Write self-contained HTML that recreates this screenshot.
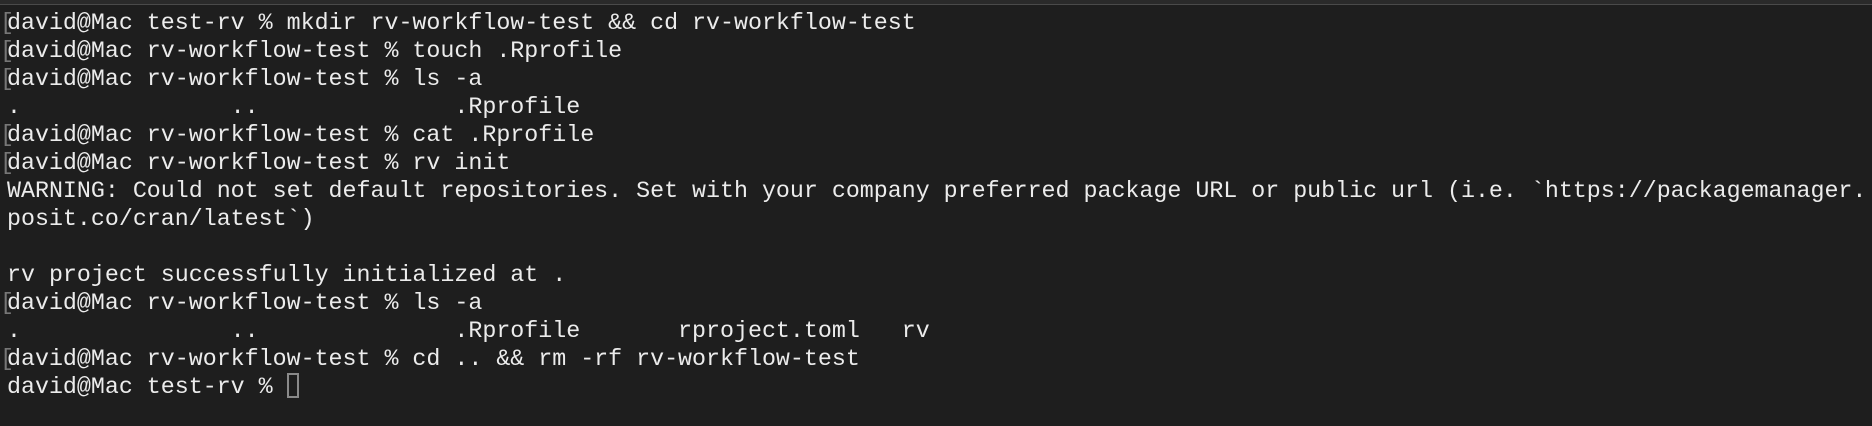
<!DOCTYPE html>
<html><head><meta charset="utf-8"><style>
html,body{margin:0;padding:0;}
body{width:1872px;height:426px;background:#1e1e1e;overflow:hidden;position:relative;}
.top{position:absolute;left:0;top:0;width:1872px;height:4px;background:#2a2a2a;border-bottom:1px solid #4a4a4a;}
pre{position:absolute;left:7px;top:9px;margin:0;font-family:"Liberation Mono",monospace;font-size:23.3px;line-height:28px;color:#ececec;white-space:pre;}
.b{position:absolute;left:-7px;color:#777;}
.cur{display:inline-block;width:12px;height:25px;border:2px solid #8a8a8a;box-sizing:border-box;vertical-align:-5px;}
</style></head><body>
<div class="top"></div>
<pre><span class="b">[</span>david@Mac test-rv % mkdir rv-workflow-test &amp;&amp; cd rv-workflow-test
<span class="b">[</span>david@Mac rv-workflow-test % touch .Rprofile
<span class="b">[</span>david@Mac rv-workflow-test % ls -a
.               ..              .Rprofile
<span class="b">[</span>david@Mac rv-workflow-test % cat .Rprofile
<span class="b">[</span>david@Mac rv-workflow-test % rv init
WARNING: Could not set default repositories. Set with your company preferred package URL or public url (i.e. `https://packagemanager.
posit.co/cran/latest`)

rv project successfully initialized at .
<span class="b">[</span>david@Mac rv-workflow-test % ls -a
.               ..              .Rprofile       rproject.toml   rv
<span class="b">[</span>david@Mac rv-workflow-test % cd .. &amp;&amp; rm -rf rv-workflow-test
david@Mac test-rv % <span class="cur"></span></pre>
</body></html>
